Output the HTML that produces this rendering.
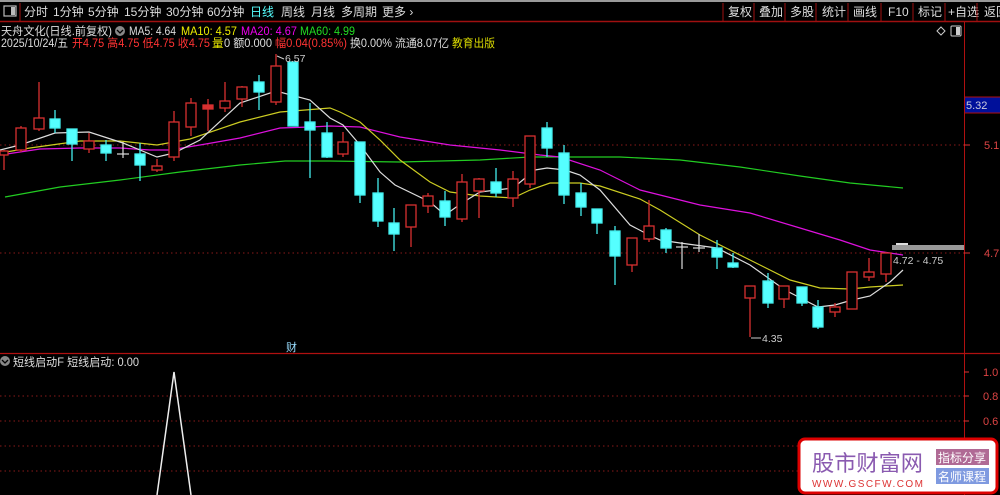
<!DOCTYPE html>
<html><head><meta charset="utf-8"><style>
body{margin:0;background:#000;width:1000px;height:495px;overflow:hidden;font-family:"Liberation Sans","Noto Sans CJK SC",sans-serif;}
svg{display:block}
text{font-family:"Liberation Sans","Noto Sans CJK SC",sans-serif;}
</style></head><body>
<svg width="1000" height="495" xmlns="http://www.w3.org/2000/svg">
<rect width="1000" height="495" fill="#000"/>
<rect x="0" y="0" width="1000" height="2" fill="#9a9a9a"/>
<line x1="0" y1="21.5" x2="1000" y2="21.5" stroke="#a01010" stroke-width="1.5"/>
<rect x="4" y="6" width="12" height="10" fill="none" stroke="#bbb" stroke-width="1.2"/><rect x="11" y="7" width="4" height="8" fill="#bbb"/>
<line x1="20" y1="3" x2="20" y2="21" stroke="#a01010"/>
<g font-size="12" fill="#ddd">
<text x="24" y="16">分时</text><text x="53" y="16">1分钟</text><text x="88" y="16">5分钟</text><text x="124" y="16">15分钟</text><text x="166" y="16">30分钟</text><text x="207" y="16">60分钟</text>
<text x="250" y="16" fill="#5ff">日线</text><text x="281" y="16">周线</text><text x="311" y="16">月线</text><text x="341" y="16">多周期</text><text x="382" y="16">更多 ›</text>
<text x="728" y="16">复权</text><text x="759" y="16">叠加</text><text x="790" y="16">多股</text><text x="822" y="16">统计</text><text x="853" y="16">画线</text><text x="888" y="16">F10</text><text x="918" y="16">标记</text><text x="948" y="16">+自选</text><text x="984" y="16">返回</text>
</g>
<g stroke="#a01010"><line x1="723" y1="3" x2="723" y2="21"/><line x1="754" y1="3" x2="754" y2="21"/><line x1="785" y1="3" x2="785" y2="21"/><line x1="816" y1="3" x2="816" y2="21"/><line x1="848" y1="3" x2="848" y2="21"/><line x1="881" y1="3" x2="881" y2="21"/><line x1="913" y1="3" x2="913" y2="21"/><line x1="945" y1="3" x2="945" y2="21"/><line x1="977" y1="3" x2="977" y2="21"/></g>
<g font-size="11.5">
<text x="1" y="35" fill="#ddd" textLength="111" lengthAdjust="spacingAndGlyphs">天舟文化(日线.前复权)</text>
<circle cx="120" cy="31" r="5" fill="#888"/><path d="M117 30 L120 33 L123 30" stroke="#000" fill="none" stroke-width="1.3"/>
<text x="129" y="35" fill="#ddd" textLength="47" lengthAdjust="spacingAndGlyphs">MA5: 4.64</text>
<text x="181" y="35" fill="#ee0" textLength="56" lengthAdjust="spacingAndGlyphs">MA10: 4.57</text>
<text x="241" y="35" fill="#e0e" textLength="56" lengthAdjust="spacingAndGlyphs">MA20: 4.67</text>
<text x="300" y="35" fill="#2d2" textLength="55" lengthAdjust="spacingAndGlyphs">MA60: 4.99</text>
<text x="1" y="47" fill="#ddd" textLength="67" lengthAdjust="spacingAndGlyphs">2025/10/24/五</text>
<text x="72" y="47" fill="#f33" textLength="138" lengthAdjust="spacingAndGlyphs">开4.75 高4.75 低4.75 收4.75</text>
<text x="212" y="47" fill="#ee0">量</text><text x="224" y="47" fill="#ddd" textLength="48" lengthAdjust="spacingAndGlyphs">0 额0.000</text>
<text x="275" y="47" fill="#f33" textLength="72" lengthAdjust="spacingAndGlyphs">幅0.04(0.85%)</text>
<text x="350" y="47" fill="#ddd" textLength="99" lengthAdjust="spacingAndGlyphs">换0.00% 流通8.07亿</text><text x="452" y="47" fill="#dd0" textLength="43" lengthAdjust="spacingAndGlyphs">教育出版</text>
</g>
<path d="M937 31 L941 27 L945 31 L941 35 Z" fill="none" stroke="#ccc"/>
<rect x="951" y="26" width="10" height="10" rx="1" fill="none" stroke="#ccc"/><rect x="956" y="27" width="4" height="8" fill="#ccc"/>
<line x1="964.5" y1="22" x2="964.5" y2="495" stroke="#b01010"/>
<line x1="0" y1="353.5" x2="1000" y2="353.5" stroke="#b01010" stroke-width="1.3"/>
<g stroke="#8a1a1a" stroke-dasharray="1.5,3">
<line x1="0" y1="145" x2="964" y2="145"/><line x1="0" y1="253" x2="964" y2="253"/>
<line x1="0" y1="396" x2="964" y2="396"/><line x1="0" y1="421" x2="964" y2="421"/><line x1="0" y1="446" x2="964" y2="446"/><line x1="0" y1="471" x2="964" y2="471"/>
</g>
<rect x="965" y="97" width="35" height="16" fill="#00109a"/><line x1="965" y1="97" x2="1000" y2="97" stroke="#b01010"/><line x1="965" y1="113" x2="1000" y2="113" stroke="#b01010"/>
<text x="966" y="109" font-size="11" fill="#ccd">5.32</text>
<g font-size="11" fill="#d44"><text x="984" y="149">5.1</text><text x="984" y="257">4.7</text><text x="983" y="376">1.0</text><text x="983" y="400">0.8</text><text x="983" y="425">0.6</text></g>
<g stroke="#d33"><line x1="964" y1="145" x2="970" y2="145"/><line x1="964" y1="253" x2="970" y2="253"/><line x1="964" y1="372" x2="969" y2="372"/><line x1="964" y1="396" x2="969" y2="396"/><line x1="964" y1="421" x2="969" y2="421"/></g>
<g fill="none" stroke-width="1.2">
<polyline stroke="#2c2" points="5,197 60,187 120,180 180,172 240,165 285,161 330,161 400,162 480,160 530,157 570,157 620,157 680,160 740,167 800,176 850,183 903,188"/>
<polyline stroke="#d1d" points="0,155 40,149 80,148 120,148 150,150 170,150 200,145 240,138 280,128 310,127 330,126 360,127 400,137 450,145 500,150 540,155 560,157 600,170 640,190 700,205 750,213 800,228 840,240 870,250 903,255"/>
<polyline stroke="#cc2" points="0,153 30,148 80,141 120,141 157,145 190,139 240,122 280,112 293,111 330,108 340,112 360,122 380,140 400,160 430,182 450,192 480,196 513,198 530,190 550,183 580,183 600,186 640,199 660,210 700,235 750,260 790,280 820,288 850,289 870,287 903,285"/>
<polyline stroke="#ddd" points="0,150 20,145 55,133 89,132 123,143 157,157 174,153 200,140 240,103 276,91 310,100 330,118 343,125 360,145 380,172 395,185 430,202 445,215 462,203 480,192 513,188 535,170 547,168 565,170 580,175 600,190 630,225 649,235 660,240 680,243 717,248 750,265 785,290 818,307 835,305 852,300 870,296 890,282 903,270"/>
</g>
<g stroke="#d83030" fill="#000" stroke-width="1.3">
<line x1="4" y1="150" x2="4" y2="170"/><rect x="0" y="151" width="8" height="4"/>
<line x1="21" y1="126" x2="21" y2="152"/><rect x="16" y="128" width="10" height="22"/>
<line x1="39" y1="82" x2="39" y2="131"/><rect x="34" y="118" width="10" height="11"/>
<line x1="89" y1="133" x2="89" y2="153"/><rect x="84" y="141" width="10" height="8"/>
<line x1="157" y1="159" x2="157" y2="172"/><rect x="152" y="166" width="10" height="4"/>
<line x1="174" y1="111" x2="174" y2="161"/><rect x="169" y="122" width="10" height="35"/>
<line x1="191" y1="98" x2="191" y2="136"/><rect x="186" y="103" width="10" height="24"/>
<line x1="208" y1="99" x2="208" y2="131"/><rect x="203" y="105" width="10" height="4" fill="#d83030"/>
<line x1="225" y1="82" x2="225" y2="112"/><rect x="220" y="101" width="10" height="7"/>
<line x1="242" y1="86" x2="242" y2="107"/><rect x="237" y="87" width="10" height="12"/>
<line x1="276" y1="54" x2="276" y2="105"/><rect x="271" y="66" width="10" height="36"/>
<line x1="343" y1="132" x2="343" y2="157"/><rect x="338" y="142" width="10" height="12"/>
<line x1="411" y1="205" x2="411" y2="247"/><rect x="406" y="205" width="10" height="22"/>
<line x1="428" y1="193" x2="428" y2="213"/><rect x="423" y="196" width="10" height="10"/>
<line x1="462" y1="174" x2="462" y2="222"/><rect x="457" y="182" width="10" height="37"/>
<line x1="479" y1="178" x2="479" y2="218"/><rect x="474" y="179" width="10" height="12"/>
<line x1="513" y1="171" x2="513" y2="207"/><rect x="508" y="179" width="10" height="19"/>
<line x1="530" y1="136" x2="530" y2="188"/><rect x="525" y="136" width="10" height="48"/>
<line x1="632" y1="238" x2="632" y2="272"/><rect x="627" y="238" width="10" height="27"/>
<line x1="649" y1="200" x2="649" y2="242"/><rect x="644" y="226" width="10" height="13"/>
<line x1="750" y1="286" x2="750" y2="337"/><rect x="745" y="286" width="10" height="12"/>
<line x1="784" y1="286" x2="784" y2="308"/><rect x="779" y="286" width="10" height="13"/>
<line x1="835" y1="303" x2="835" y2="317"/><rect x="830" y="307" width="10" height="5"/>
<line x1="852" y1="272" x2="852" y2="309"/><rect x="847" y="272" width="10" height="37"/>
<line x1="869" y1="258" x2="869" y2="281"/><rect x="864" y="272" width="10" height="5"/>
<line x1="886" y1="252" x2="886" y2="282"/><rect x="881" y="253" width="10" height="21"/>
</g>
<g stroke="#4ee" fill="#55ffff" stroke-width="1.3">
<line x1="55" y1="110" x2="55" y2="133"/><rect x="50" y="119" width="10" height="9"/>
<line x1="72" y1="129" x2="72" y2="161"/><rect x="67" y="129" width="10" height="15"/>
<line x1="106" y1="140" x2="106" y2="161"/><rect x="101" y="145" width="10" height="8"/>
<line x1="140" y1="143" x2="140" y2="181"/><rect x="135" y="154" width="10" height="11"/>
<line x1="259" y1="75" x2="259" y2="110"/><rect x="254" y="82" width="10" height="10"/>
<rect x="288" y="62" width="10" height="64"/>
<line x1="310" y1="103" x2="310" y2="178"/><rect x="305" y="122" width="10" height="8"/>
<line x1="327" y1="122" x2="327" y2="158"/><rect x="322" y="133" width="10" height="24"/>
<line x1="360" y1="142" x2="360" y2="203"/><rect x="355" y="142" width="10" height="53"/>
<line x1="378" y1="178" x2="378" y2="227"/><rect x="373" y="193" width="10" height="28"/>
<line x1="394" y1="208" x2="394" y2="251"/><rect x="389" y="223" width="10" height="11"/>
<line x1="445" y1="191" x2="445" y2="226"/><rect x="440" y="201" width="10" height="16"/>
<line x1="496" y1="168" x2="496" y2="197"/><rect x="491" y="182" width="10" height="11"/>
<line x1="547" y1="122" x2="547" y2="157"/><rect x="542" y="128" width="10" height="20"/>
<line x1="564" y1="145" x2="564" y2="204"/><rect x="559" y="153" width="10" height="42"/>
<line x1="581" y1="183" x2="581" y2="216"/><rect x="576" y="193" width="10" height="14"/>
<line x1="597" y1="209" x2="597" y2="234"/><rect x="592" y="209" width="10" height="14"/>
<line x1="615" y1="226" x2="615" y2="285"/><rect x="610" y="231" width="10" height="25"/>
<line x1="666" y1="228" x2="666" y2="253"/><rect x="661" y="230" width="10" height="18"/>
<line x1="717" y1="240" x2="717" y2="269"/><rect x="712" y="248" width="10" height="9"/>
<line x1="733" y1="253" x2="733" y2="268"/><rect x="728" y="263" width="10" height="4"/>
<line x1="768" y1="273" x2="768" y2="308"/><rect x="763" y="281" width="10" height="22"/>
<line x1="802" y1="287" x2="802" y2="306"/><rect x="797" y="287" width="10" height="16"/>
<line x1="818" y1="300" x2="818" y2="329"/><rect x="813" y="307" width="10" height="20"/>
</g>
<g stroke="#ddd" stroke-width="1.2">
<line x1="123" y1="142" x2="123" y2="158"/><line x1="117" y1="154" x2="129" y2="154"/>
<line x1="682" y1="242" x2="682" y2="269"/><line x1="676" y1="247" x2="688" y2="247"/>
<line x1="699" y1="234" x2="699" y2="252"/><line x1="693" y1="248" x2="705" y2="248"/>
</g>
<g font-size="10.5" fill="#ccc">
<text x="285" y="62">6.57</text><path d="M277 56 L284 59" stroke="#ccc"/>
<text x="762" y="342">4.35</text><path d="M751 338 L761 338" stroke="#ccc"/>
<text x="893" y="264">4.72 - 4.75</text>
</g>
<rect x="892" y="245" width="72" height="5" fill="#999"/><rect x="896" y="243" width="12" height="2" fill="#ddd"/>
<text x="286" y="351" font-size="11" fill="#9df">财</text>
<circle cx="5" cy="361" r="5" fill="#888"/><path d="M2 360 L5 363 L8 360" stroke="#000" fill="none" stroke-width="1.3"/>
<text x="13" y="366" font-size="11.5" fill="#ddd" textLength="126" lengthAdjust="spacingAndGlyphs">短线启动F  短线启动: 0.00</text>
<polyline points="157,495 174,372 191,495" fill="none" stroke="#eee" stroke-width="1.5"/>
<rect x="799" y="439" width="198" height="54" rx="6" fill="#fff" stroke="#d00" stroke-width="3"/>
<text x="812" y="471" font-size="22" fill="#8a5ab0" textLength="111" lengthAdjust="spacingAndGlyphs">股市财富网</text>
<text x="812" y="487" font-size="10" fill="#d33" font-family="Liberation Serif,serif" textLength="111" lengthAdjust="spacing">WWW.GSCFW.COM</text>
<rect x="936" y="449" width="53" height="16" fill="#b06a95"/><text x="938" y="462" font-size="12" fill="#fff">指标分享</text>
<rect x="936" y="468" width="53" height="16" fill="#7f9ae0"/><text x="938" y="481" font-size="12" fill="#fff">名师课程</text>
</svg>
</body></html>
